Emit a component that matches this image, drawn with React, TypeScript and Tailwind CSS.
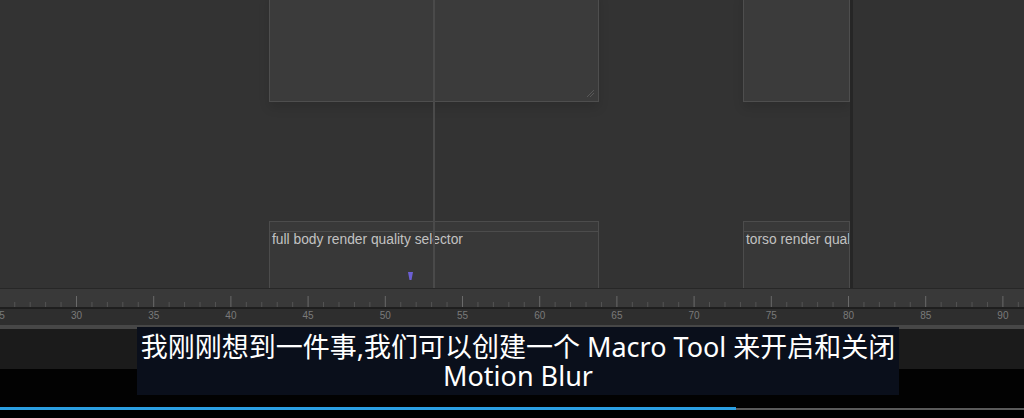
import React from "react";

const Ruler = () => {
  const ticks: React.ReactNode[] = [];
  const labels: React.ReactNode[] = [];
  for (let v = 24; v <= 92; v++) {
    const x = 76.5 + (v - 30) * 15.44;
    const major = v % 5 === 0;
    ticks.push(
      <line
        key={"t" + v}
        x1={x}
        x2={x}
        y1={major ? 8 : 14}
        y2={19}
        stroke={major ? "#6a6a6a" : "#545454"}
        strokeWidth={1}
      />
    );
    if (major) {
      labels.push(
        <text
          key={"l" + v}
          x={x}
          y={31}
          textAnchor="middle"
          fontSize={10}
          fill="#7a7a7a"
          fontFamily="'Liberation Sans', Arial, sans-serif"
        >
          {v}
        </text>
      );
    }
  }
  return (
    <svg width={1024} height={37} className="block">
      <rect x={0} y={0} width={1024} height={1} fill="#272727" />
      <rect x={0} y={1} width={1024} height={18} fill="#393939" />
      <rect x={0} y={19} width={1024} height={1.5} fill="#1f1f1f" />
      <rect x={0} y={20.5} width={1024} height={16.5} fill="#2e2e2e" />
      {ticks}
      {labels}
    </svg>
  );
};

const NodeBox = ({ text, className }: { text: string; className: string }) => (
  <div className={"absolute border border-[#4c4c4c] bg-[#383838] overflow-hidden " + className}>
    <div className="h-[10px] border-b border-[#4c4c4c] bg-[#393939]" />
    <div className="pl-[2px] text-[13.8px] leading-[16px] text-[#c2c2c2] whitespace-nowrap font-['Liberation_Sans',Arial,sans-serif]">
      {text}
    </div>
  </div>
);

export default function App() {
  return (
    <div className="relative w-[1024px] h-[418px] overflow-hidden bg-black">
      <div className="flex h-[288px]">
        <div className="relative w-[850px] h-full overflow-hidden bg-[#333333]">
          <div className="absolute left-[269px] top-[-10px] w-[330px] h-[112px] border-[1.5px] border-[#4e4e4e] bg-[#3b3b3b] shadow-[0_6px_10px_rgba(0,0,0,0.12)]">
            <svg className="absolute right-[3px] bottom-[3px]" width={9} height={9}>
              <line x1={1} y1={8} x2={8} y2={1} stroke="#585858" strokeWidth={1} />
              <line x1={4} y1={8} x2={8} y2={4} stroke="#585858" strokeWidth={1} />
            </svg>
          </div>
          <div className="absolute left-[743px] top-[-10px] w-[107px] h-[112px] border-[1.5px] border-[#4e4e4e] bg-[#3b3b3b] shadow-[0_6px_10px_rgba(0,0,0,0.12)]" />
          <NodeBox text="full body render quality selector" className="left-[269px] top-[221px] w-[330px] h-[80px]" />
          <NodeBox text="torso render quality selector" className="left-[743px] top-[221px] w-[107px] h-[80px]" />
          <div className="absolute left-[433px] top-0 w-[1.5px] h-full bg-[#4a4a4a]" />
          <svg className="absolute left-[407px] top-[271px]" width={7} height={11}>
            <path d="M1 1 L6 1 L4.5 9 L2.5 9 Z" fill="#6c5fd4" />
          </svg>
        </div>
        <div className="w-[3px] h-full bg-[#262626]" />
        <div className="flex-1 h-full bg-[#323232]" />
      </div>
      <Ruler />
      <div className="h-[4px] bg-[#474747]" />
      <div className="h-[40px] bg-[#1b1b1b]" />
      <div className="h-[38px] bg-[#020202]" />
      <div className="flex h-[3px] items-end">
        <div className="w-[736px] h-[3px] bg-[#2b9fe2]" />
        <div className="flex-1 h-[2px] bg-[#5a5a5a]" />
      </div>
      <div className="h-[8px] bg-black" />

      <div className="absolute left-[137px] top-[327px] w-[762px] h-[68px] bg-[#0a0f1b] pt-[5px] text-center text-white text-[27px] leading-[29px] font-['Noto_Sans','Noto_Sans_CJK_SC',sans-serif]">
        <div className="whitespace-nowrap">我刚刚想到一件事,我们可以创建一个 Macro Tool 来开启和关闭</div>
        <div className="whitespace-nowrap">Motion Blur</div>
      </div>
    </div>
  );
}
